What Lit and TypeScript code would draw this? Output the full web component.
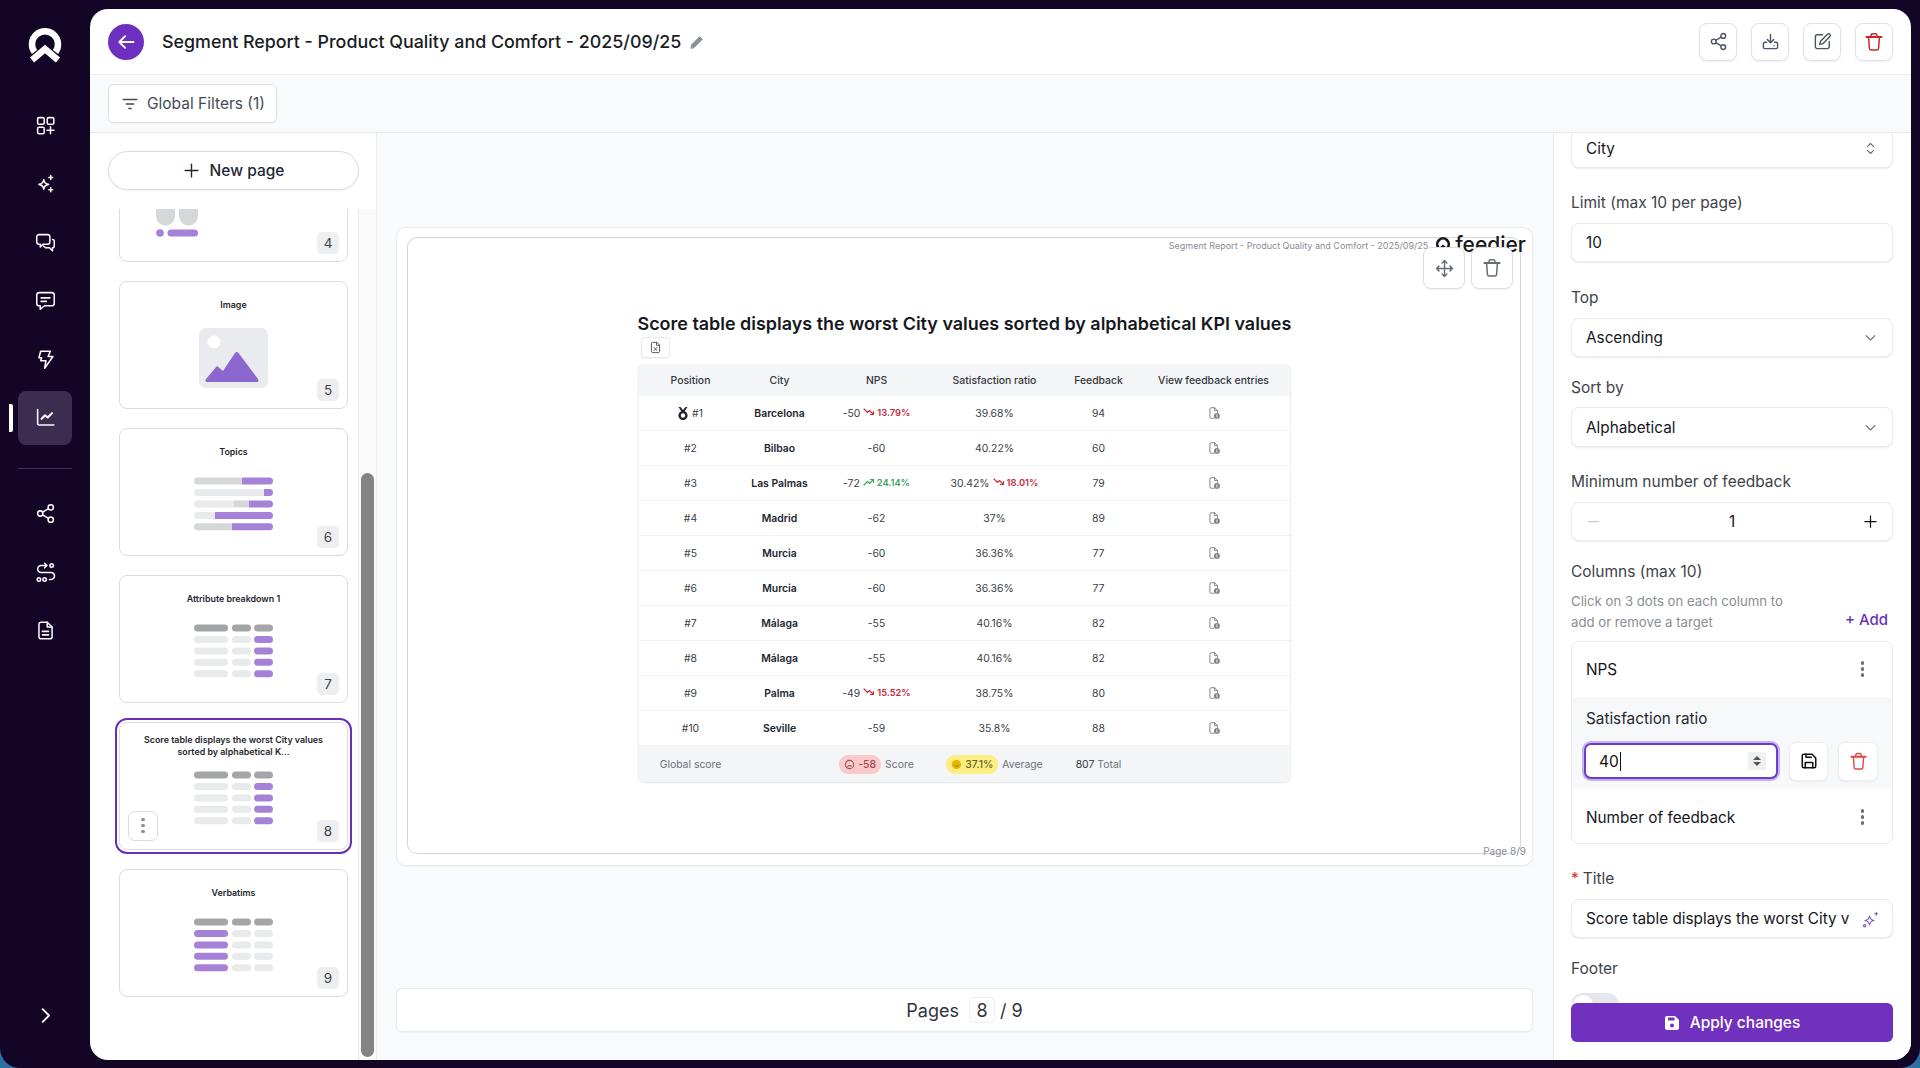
import { LitElement, html, css, svg } from "lit";
import { customElement } from "lit/decorators.js";

const ic = (body: unknown, size = 20, sw = 1.8, cls = "") => html`<svg class=${cls} width=${size} height=${size} viewBox="0 0 24 24" fill="none" stroke="currentColor" stroke-width=${sw} stroke-linecap="round" stroke-linejoin="round">${body}</svg>`;

const P = {
  grid: svg`<rect x="3" y="3" width="7.5" height="7.5" rx="1.5"/><rect x="14" y="3" width="7.5" height="7.5" rx="1.5"/><rect x="3" y="14" width="7.5" height="7.5" rx="1.5"/><path d="M17.7 13.5v8M13.7 17.5h8"/>`,
  spark: svg`<path d="M10 7.500c.6 3.600 2 5 5.500 5.500-3.500.6-4.900 2-5.500 5.500-.6-3.500-2-4.900-5.500-5.500 3.500-.5 4.900-1.900 5.500-5.500z"/><path d="M18 3v4.500M15.800 5.200h4.400M18 17v4.500M15.800 19.200h4.400"/>`,
  chats: svg`<path d="M4.500 3h10a2.500 2.500 0 0 1 2.500 2.500v6a2.500 2.500 0 0 1-2.500 2.500H9l-3 3v-3H4.500A2.500 2.500 0 0 1 2 11.500v-6A2.500 2.500 0 0 1 4.500 3z"/><path d="M20 8.500a2 2 0 0 1 2 2V16a2 2 0 0 1-2 2v3.500L16.500 18H12l-2.500-2"/>`,
  chat: svg`<path d="M5 3h14a3 3 0 0 1 3 3v9a3 3 0 0 1-3 3h-8l-5 4v-4H5a3 3 0 0 1-3-3V6a3 3 0 0 1 3-3z"/><path d="M7 9h10M7 13h6"/>`,
  bolt: svg`<path d="M6.500 2.500h11l-2.500 6h5.500L11 22l1.500-8.500H6.500l1-3.500H4.500z"/>`,
  chart: svg`<path d="M3 3v15.500a2 2 0 0 0 2 2h16.500"/><path d="M7.500 13.500l4-4 3 2.500 5-5" stroke-width="2.400"/>`,
  share: svg`<circle cx="18" cy="5" r="3"/><circle cx="6" cy="12" r="3"/><circle cx="18" cy="19" r="3"/><path d="M8.600 10.500l6.800-4M8.600 13.500l6.800 4"/>`,
  route: svg`<circle cx="19" cy="4" r="2"/><circle cx="4.500" cy="20" r="2"/><circle cx="11" cy="20" r="2"/><path d="M13.500 4H7a4 4 0 0 0 0 8h11a4 4 0 0 1 .5 8h-2"/><path d="M11 1.500 13.500 4 11 6.500"/>`,
  file: svg`<path d="M14 2.500H7a2.500 2.500 0 0 0-2.500 2.500v14A2.500 2.500 0 0 0 7 21.500h10a2.500 2.500 0 0 0 2.500-2.500V8z"/><path d="M14 2.500V8h5.500M8.500 13h7M8.500 17h7"/>`,
  chevR: svg`<path d="M8 3l9 9-9 9"/>`,
  filter: svg`<path d="M3 6h18M7 12h10M10.500 18h3"/>`,
  plus: svg`<path d="M12 3v18M3 12h18"/>`,
  minus: svg`<path d="M4 12h16"/>`,
  arrowL: svg`<path d="M21 12H4M11 5l-7 7 7 7"/>`,
  pencil: svg`<path d="M3 21l1-5L16 4l4 4L8 20z" fill="currentColor"/>`,
  download: svg`<path d="M12 3v10M8 9.500l4 4 4-4"/><path d="M7 13H5a2 2 0 0 0-2 2v4a2 2 0 0 0 2 2h14a2 2 0 0 0 2-2v-4a2 2 0 0 0-2-2h-2"/><path d="M16.500 17.500h.01"/>`,
  edit: svg`<path d="M12 3.500H5.500A2.500 2.500 0 0 0 3 6v12.500A2.500 2.500 0 0 0 5.500 21H18a2.500 2.500 0 0 0 2.500-2.500V12"/><path d="M18.300 2.700a2.200 2.200 0 0 1 3.100 3.100L12.500 14.700l-4 1 1-4z"/>`,
  trash: svg`<path d="M3 6h18" stroke-width="2.600"/><path d="M8.500 5V4a2 2 0 0 1 2-2h3a2 2 0 0 1 2 2v1" /><path d="M5.500 6.500l1 13a2 2 0 0 0 2 2h7a2 2 0 0 0 2-2l1-13"/>`,
  move: svg`<path d="M12 2v20M2 12h20M9 5l3-3 3 3M9 19l3 3 3-3M5 9l-3 3 3 3M19 9l3 3-3 3"/>`,
  updown: svg`<path d="M7 9l5-5 5 5M7 15l5 5 5-5"/>`,
  chevD: svg`<path d="M5 9l7 7 7-7"/>`,
  save: svg`<path d="M5 3h11l5 5v11a2 2 0 0 1-2 2H5a2 2 0 0 1-2-2V5a2 2 0 0 1 2-2z"/><path d="M7 21v-7h10v7M8 3v4h7"/>`,
  aiStar: svg`<path d="M11 7c.7 4 2.300 5.500 6 6-3.700.7-5.300 2.200-6 6-.7-3.800-2.300-5.300-6-6 3.700-.5 5.300-2 6-6z" transform="translate(-1 1)"/><path d="M19 3v4M17 5h4"/><circle cx="3.500" cy="21" r="1.500"/>`,
  docInfo: svg`<path d="M13 3H7a2 2 0 0 0-2 2v14a2 2 0 0 0 2 2h5"/><path d="M13 3l5 5v3M13 3v5h5"/><circle cx="17" cy="17" r="5" fill="currentColor" stroke="none"/><path d="M17 15v4" stroke="#fff" stroke-width="1.500"/>`,
  docX: svg`<path d="M14 2.500H7A2.500 2.500 0 0 0 4.500 5v14A2.500 2.500 0 0 0 7 21.500h10a2.500 2.500 0 0 0 2.500-2.500V8z"/><path d="M14 2.500V8h5.500M9.500 12l5 5.500M14.500 12l-5 5.500"/>`,
  down: svg`<path d="M2 6l7 7 4-4 8 8M21 11v6h-6"/>`,
  up: svg`<path d="M2 18l7-7 4 4 8-8M21 13V7h-6"/>`,
};

const dots = html`<span class="dots"><i></i><i></i><i></i></span>`;

const rows = [
  { p: "#1", medal: true, c: "Barcelona", n: "-50", nt: ["d", "13.79%"], s: "39.68%", f: "94" },
  { p: "#2", c: "Bilbao", n: "-60", s: "40.22%", f: "60" },
  { p: "#3", c: "Las Palmas", n: "-72", nt: ["u", "24.14%"], s: "30.42%", st: ["d", "18.01%"], f: "79" },
  { p: "#4", c: "Madrid", n: "-62", s: "37%", f: "89" },
  { p: "#5", c: "Murcia", n: "-60", s: "36.36%", f: "77" },
  { p: "#6", c: "Murcia", n: "-60", s: "36.36%", f: "77" },
  { p: "#7", c: "Málaga", n: "-55", s: "40.16%", f: "82" },
  { p: "#8", c: "Málaga", n: "-55", s: "40.16%", f: "82" },
  { p: "#9", c: "Palma", n: "-49", nt: ["d", "15.52%"], s: "38.75%", f: "80" },
  { p: "#10", c: "Seville", n: "-59", s: "35.8%", f: "88" },
] as { p: string; medal?: boolean; c: string; n: string; nt?: string[]; s: string; st?: string[]; f: string }[];

const trend = (t?: string[]) => t ? html`<span class="trend ${t[0]}">${ic(t[0] === "d" ? P.down : P.up, 12, 2.2)}${t[1]}</span>` : "";

const H = "#a3a5a8", L = "#e8eaec", V = "#a582d8", G = "#d5d7da";

const bar = (x: number, y: number, w: number, c: string) => svg`<rect x=${x} y=${y} width=${w} height="7" rx="3.500" fill=${c}/>`;
const mini = (first: string) => svg`${[0, 1, 2, 3, 4].map((i) => {
  const y = 49.5 + i * 11.45;
  const a = i === 0 ? H : first;
  const b = i === 0 ? H : L;
  const c = i === 0 ? H : first === V ? L : V;
  return svg`${bar(75, y, 34, a)}${bar(113, y, 19, b)}${bar(135, y, 19, c)}`;
})}`;
const seg = (x: number, y: number, parts: [number, string][]) => {
  let cx = x;
  return parts.map(([w, c], i) => {
    const r = svg`<path d=${i === 0
      ? `M${cx + 3.5} ${y}h${w - 3.5}v7h-${w - 3.5}a3.5 3.5 0 0 1 0-7z`
      : i === parts.length - 1
        ? `M${cx} ${y}h${w - 3.5}a3.5 3.5 0 0 1 0 7h-${w - 3.5}z`
        : `M${cx} ${y}h${w}v7h-${w}z`} fill=${c}/>`;
    cx += w;
    return r;
  });
};

const thumbs = [
  { n: 4, t: "", art: svg`<path d="M37 70h19v12a9.500 9.500 0 0 1-19 0zM60 70h19v12a9.500 9.500 0 0 1-19 0z" fill=${G}/><circle cx="41" cy="99" r="3.800" fill=${V}/><rect x="48.500" y="95.500" width="30.500" height="7" rx="3.500" fill=${V}/>` },
  { n: 5, t: "Image", art: svg`<rect x="80" y="47" width="69" height="60" rx="7" fill="#e9ebee"/><circle cx="95" cy="61" r="6.500" fill="#fff"/><path d="M87 98l11-13 6 5 12-18c1-1.500 2.500-1.500 3.500 0L139 98c1 2 0 3-1.500 3H88.500c-2 0-2.500-1.500-1.500-3z" fill="#8e66cf"/>` },
  { n: 6, t: "Topics", art: svg`${seg(75, 49.5, [[48, G], [31, V]])}${seg(75, 61, [[70, L], [9, V]])}${seg(75, 72.4, [[40, L], [15, G], [24, V]])}${seg(75, 83.9, [[21, L], [58, V]])}${seg(75, 95.3, [[38, G], [41, V]])}` },
  { n: 7, t: "Attribute breakdown 1", art: mini(L) },
  { n: 8, t: "Score table displays the worst City values sorted by alphabetical K...", art: mini(L), sel: true },
  { n: 9, t: "Verbatims", art: mini(V) },
];

@customElement("app-root")
export class AppRoot extends LitElement {
  static styles = css`
    :host { display: block; width: 1920px; height: 1068px; overflow: hidden; background: #2f6fa8; font-family: Inter, "Liberation Sans", sans-serif; color: #111827; }
    * { box-sizing: border-box; }
    svg { display: block; flex: none; }
    .win { display: flex; height: 1068px; background: #130525; border-radius: 0 0 20px 20px; padding: 9px 9px 8px 0; }
    .side { width: 90px; flex: none; margin-top: -9px; margin-bottom: -8px; padding: 27px 0 26px 18px; display: flex; flex-direction: column; color: #fff; }
    .logo { width: 54px; height: 36px; margin-bottom: 35px; display: flex; justify-content: center; }
    .nav { width: 54px; height: 54px; margin-bottom: 4.5px; display: flex; align-items: center; justify-content: center; border-radius: 8px; position: relative; color: #fbf9ff; }
    .nav.on { background: #3a2d50; margin-bottom: 0; }
    .nav.on::before { content: ""; position: absolute; left: -9px; top: 13px; width: 4px; height: 28px; background: #fff; border-radius: 0 2px 2px 0; }
    .rule { width: 54px; height: 1px; background: #3b2f52; margin: 23px 0 18px; flex: none; }
    .chev { margin-top: auto; margin-bottom: 0; }
    .main { flex: 1; min-width: 0; background: #fff; border-radius: 18px; overflow: hidden; display: flex; flex-direction: column; }
    .top { height: 66px; flex: none; display: flex; align-items: center; padding: 0 18px; border-bottom: 1px solid #eceef0; }
    .back { width: 36px; height: 36px; border-radius: 50%; background: #6d2fc0; color: #fff; display: flex; align-items: center; justify-content: center; margin-right: 18px; }
    .ttl { font-size: 17.85px; font-weight: 500; color: #1a1d24; white-space: nowrap; }
    .pen { color: #8b8f96; margin-left: 8px; }
    .acts { margin-left: auto; display: flex; gap: 14px; }
    .ibtn { width: 38px; height: 38px; border: 1px solid #dfe1e4; border-radius: 8px; background: #fff; display: flex; align-items: center; justify-content: center; color: #4b5563; box-shadow: 0 1px 2px rgba(0,0,0,.07); }
    .ibtn.red { color: #c62828; }
    .fbar { height: 58px; flex: none; background: #f9fafb; border-bottom: 1px solid #e6e8eb; padding: 9px 18px; }
    .fbtn { width: 169px; height: 39px; background: #fff; border: 1px solid #dfe1e4; border-radius: 6px; display: flex; align-items: center; gap: 8px; padding-left: 12px; font-size: 15.5px; color: #444b55; box-shadow: 0 1px 2px rgba(0,0,0,.05); }
    .body { flex: 1; display: flex; min-height: 0; position: relative; }
    .left { width: 287px; flex: none; display: flex; flex-direction: column; border-right: 1px solid #eceef0; }
    .npw { height: 76px; flex: none; padding: 18px 18px 0; }
    .npbtn { width: 251px; height: 39px; border: 1px solid #d8dade; border-radius: 20px; display: flex; align-items: center; justify-content: center; gap: 10px; font-size: 15.5px; font-weight: 500; color: #1f2937; background: #fff; box-shadow: 0 1px 2px rgba(0,0,0,.05); }
    .lrow { flex: 1; display: flex; min-height: 0; }
    .lcol { width: 268px; flex: none; overflow: hidden; padding: 0 10px 0 29px; }
    .lin { margin-top: -75.5px; display: flex; flex-direction: column; gap: 19px; }
    .track { flex: 1; background: #fafafa; border-left: 1px solid #e9eaec; padding: 264px 2px 3px 2px; }
    .thumb { height: 100%; border-radius: 7px; background: #848484; }
    .th { width: 229px; height: 128px; border: 1px solid #dadce0; border-radius: 8px; position: relative; background: #fff; flex: none; }
    .th.sel { outline: 2px solid #6a2fb8; outline-offset: 2px; }
    .th .art { position: absolute; left: -1px; top: -1px; }
    .tt { position: absolute; left: 10px; right: 10px; top: -1px; height: 48px; display: flex; align-items: center; justify-content: center; text-align: center; font-size: 8.9px; font-weight: 600; line-height: 11.3px; color: #23262d; }
    .num { position: absolute; right: 8px; bottom: 7px; width: 22px; height: 22px; background: #eceef0; border-radius: 5px; display: flex; align-items: center; justify-content: center; font-size: 13.5px; color: #444; }
    .more { position: absolute; left: 8px; bottom: 8px; width: 30px; height: 30px; border: 1px solid #dadce0; border-radius: 7px; display: flex; align-items: center; justify-content: center; background: #fff; }
    .more .dots i { background: #8a8e95; }
    .dots { display: flex; flex-direction: column; gap: 2.5px; }
    .dots i { width: 3.5px; height: 3.5px; border-radius: 50%; background: #6b7078; display: block; }
    .center { flex: 1; min-width: 0; background: #f9fafb; padding: 94px 20px 0 19px; display: flex; flex-direction: column; }
    .pcard { height: 639px; flex: none; background: #fff; border: 1px solid #e9ebee; border-radius: 10px; padding: 9px 11px 11px 10px; box-shadow: 0 1px 2px rgba(0,0,0,.04); }
    .pg { height: 617px; border: 1.5px solid #d3d5d9; border-radius: 10px; position: relative; background: #fff; }
    .phead { height: 12px; display: flex; justify-content: flex-end; align-items: center; gap: 7px; margin-right: -6px; }
    .phead .small { font-size: 9px; color: #8a8d93; margin-top: 2px; white-space: nowrap; }
    .flogo { display: flex; align-items: center; gap: 4px; font-size: 21px; font-weight: 500; color: #16181d; line-height: 16px; margin-top: 1px; }
    .over { position: absolute; top: 9px; right: 7px; display: flex; gap: 6px; }
    .over div { width: 42px; height: 42px; background: #fff; border: 1px solid #dcdee1; border-radius: 8px; display: flex; align-items: center; justify-content: center; color: #666b73; box-shadow: 0 1px 2px rgba(0,0,0,.05); }
    .pnum { position: absolute; right: -6px; bottom: -4px; font-size: 10px; color: #8a8d93; }
    .blk { width: 653px; margin: 61px auto 0; }
    .ptitle { font-size: 17.95px; line-height: 26px; font-weight: 600; color: #16181d; white-space: nowrap; }
    .xbtn { width: 29px; height: 21px; margin-left: 3px; border: 1px solid #e6e8eb; border-radius: 4px; display: flex; align-items: center; justify-content: center; color: #555; margin-bottom: 6px; box-shadow: 0 1px 1px rgba(0,0,0,.05); }
    .tbl { border-radius: 6px; overflow: hidden; box-shadow: 0 1px 2px rgba(0,0,0,.1); border-left: 1px solid #eff0f2; border-right: 1px solid #eff0f2; font-size: 10.4px; color: #3b3f46; }
    .tr { display: grid; grid-template-columns: 104px 74px 120px 116px 92px 138px 7px; align-items: center; text-align: center; height: 35px; border-bottom: 1.5px solid #f1f2f4; }
    .tr > * { display: flex; align-items: center; justify-content: center; white-space: nowrap; }
    .tr.h { height: 32px; background: #f3f5f6; border: 0; color: #33373d; font-weight: 500; }
    .tr.f { height: 36px; background: #f3f5f6; border: 0; color: #6d7178; }
    .tr b { font-weight: 600; color: #23262d; }
    .trend { display: inline-flex; align-items: center; gap: 2px; font-size: 9.3px; font-weight: 600; margin-left: 3px; position: relative; top: -1px; }
    .trend.d { color: #c7283a; }
    .trend.u { color: #3aa55f; }
    .doc { color: #7d8187; }
    .medal { color: #1f2329; margin-right: 4px; }
    .pill { height: 19px; padding: 0 5px; border-radius: 9px; display: inline-flex; align-items: center; gap: 3px; margin-right: 4px; font-weight: 500; }
    .pill.r { background: #f9c9cc; color: #a24b50; }
    .pill.y { background: #fdee82; color: #6b6320; }
    .tot { color: #33373d; margin-right: 3px; }
    .pager { margin-top: 122px; height: 44px; flex: none; background: #fff; border: 1px solid #e9ebee; border-radius: 6px; display: flex; align-items: center; justify-content: center; font-size: 18px; color: #30343a; box-shadow: 0 1px 2px rgba(0,0,0,.04); }
    .pbox { width: 26px; height: 26px; border: 1px solid #eceef0; border-radius: 4px; display: flex; align-items: center; justify-content: center; margin: 0 5px 0 10px; }
    .right { width: 358px; flex: none; border-left: 1px solid #e6e8eb; padding: 0 18px 0 17px; overflow: hidden; position: relative; background: #fff; }
    .fld { height: 39px; border: 1px solid #e8eaec; border-radius: 8px; display: flex; align-items: center; justify-content: space-between; padding: 0 14px; font-size: 15.3px; color: #15171c; background: #fff; box-shadow: 0 1px 2px rgba(0,0,0,.08); white-space: nowrap; overflow: hidden; }
    .fld > svg { color: #6b7078; }
    .first { margin-top: -4px; }
    .lab { height: 20px; line-height: 20px; font-size: 15.5px; color: #3e4249; margin-bottom: 10px; white-space: nowrap; }
    .m21 { margin-top: 21px; }
    .m24 { margin-top: 25.5px; }
    .m25 { margin-top: 25px; }
    .m26 { margin-top: 26px; }
    .mb9s { margin-bottom: 9px; }
    .tall { height: 40px; }
    .mn { color: #c9ccd1; }
    .pl { color: #111; }
    .help { display: flex; justify-content: space-between; align-items: flex-end; font-size: 13.2px; line-height: 20.5px; color: #8a8e95; margin: -1px 0 8.5px; }
    .add { color: #6a35b3; font-size: 15px; font-weight: 500; padding-right: 5px; line-height: 24px; }
    .cols { height: 203px; border: 1px solid #e8eaec; border-radius: 8px; overflow: hidden; display: flex; flex-direction: column; }
    .crow { height: 55px; flex: none; display: flex; justify-content: space-between; align-items: center; padding: 0 28px 0 14px; font-size: 15.3px; color: #15171c; }
    .crow.last { flex: 1; padding-top: 3px; }
    .csel { height: 92px; flex: none; background: #f6f8fa; padding: 12px 14px 0 14px; font-size: 15.3px; color: #25282e; }
    .csel .nm { height: 20px; line-height: 20px; margin-bottom: 14px; }
    .edr { display: flex; align-items: center; gap: 10px; margin-top: -1px; }
    .inp { width: 196px; height: 36px; margin: 0 1px 0 -2px; border: 2px solid #6d3ccb; box-shadow: 0 0 0 2px #c4b3ee; border-radius: 7px; background: #fff; display: flex; align-items: center; padding: 0 10px 0 13px; font-size: 15.5px; color: #111; }
    .caret { width: 1px; height: 19px; background: #111; margin-left: 1px; }
    .spin { margin-left: auto; width: 18px; height: 18px; background: #eff0f2; border-radius: 2px; display: flex; flex-direction: column; align-items: center; justify-content: center; gap: 2px; }
    .spin i { width: 0; height: 0; border-left: 4px solid transparent; border-right: 4px solid transparent; display: block; }
    .spin i.a { border-bottom: 4px solid #555; }
    .spin i.b { border-top: 4px solid #555; }
    .sq { width: 40px; height: 39px; background: #fff; border: 1px solid #eceef0; border-radius: 7px; display: flex; align-items: center; justify-content: center; color: #111; box-shadow: 0 1px 2px rgba(0,0,0,.06); }
    .sq.red { color: #e04848; }
    .star { color: #d0342c; margin-right: 4px; }
    .tf { padding-right: 12px; }
    .tf > svg { color: #7d5cc6; }
    .lab.nb { margin-bottom: 14px; }
    .tog { width: 48px; height: 24px; border-radius: 12px; background: #e5e7eb; padding: 2px; }
    .tog i { display: block; width: 20px; height: 20px; background: #fff; border-radius: 50%; }
    .apply { position: absolute; left: 17px; right: 18px; top: 870px; height: 57px; background: #fff; }
    .apply div { height: 39px; background: #7032be; border-radius: 6px; color: #fff; font-size: 15.5px; font-weight: 500; display: flex; align-items: center; justify-content: center; gap: 10px; }
  `;

  render() {
    const side = [P.grid, P.spark, P.chats, P.chat, P.bolt];
    const side2 = [P.share, P.route, P.file];
    return html`
      <div class="win">
        <aside class="side">
          <div class="logo">
            <svg width="36" height="36" viewBox="0 0 36 36" fill="none" stroke="#fff" stroke-width="6.500">
              <path d="M7.500 25A13 13 0 1 1 28.500 25"/><path d="M5 33l13-11 13 11" stroke-linejoin="miter"/>
            </svg>
          </div>
          ${side.map((p) => html`<div class="nav">${ic(p, 21, 1.75)}</div>`)}
          <div class="nav on">${ic(P.chart, 21, 1.75)}</div>
          <div class="rule"></div>
          ${side2.map((p) => html`<div class="nav">${ic(p, 21, 1.75)}</div>`)}
          <div class="nav chev">${ic(P.chevR, 17, 2.6)}</div>
        </aside>
        <div class="main">
          <header class="top">
            <div class="back">${ic(P.arrowL, 20, 2.2)}</div>
            <div class="ttl">Segment Report - Product Quality and Comfort - 2025/09/25</div>
            <div class="pen">${ic(P.pencil, 16, 1.5)}</div>
            <div class="acts">
              <div class="ibtn">${ic(P.share, 19)}</div>
              <div class="ibtn">${ic(P.download, 19)}</div>
              <div class="ibtn">${ic(P.edit, 19)}</div>
              <div class="ibtn red">${ic(P.trash, 20)}</div>
            </div>
          </header>
          <div class="fbar"><div class="fbtn">${ic(P.filter, 18, 2)}Global Filters (1)</div></div>
          <div class="body">
            <section class="left">
              <div class="npw"><div class="npbtn">${ic(P.plus, 17, 2)}New page</div></div>
              <div class="lrow">
                <div class="lcol"><div class="lin">
                  ${thumbs.map((t) => html`
                    <div class="th ${t.sel ? "sel" : ""}">
                      <svg class="art" width="229" height="127" viewBox="0 0 229 127">${t.art}</svg>
                      ${t.t ? html`<div class="tt"><span>${t.t}</span></div>` : ""}
                      <div class="num">${t.n}</div>
                      ${t.sel ? html`<div class="more">${dots}</div>` : ""}
                    </div>`)}
                </div></div>
                <div class="track"><div class="thumb"></div></div>
              </div>
            </section>
            <section class="center">
              <div class="pcard">
                <div class="pg">
                  <div class="phead">
                    <span class="small">Segment Report - Product Quality and Comfort - 2025/09/25</span>
                    <span class="flogo">
                      <svg width="16" height="17" viewBox="0 0 36 36" fill="none" stroke="#16181d" stroke-width="6"><path d="M7.500 25A13 13 0 1 1 28.500 25"/><path d="M5 33l13-11 13 11"/></svg>
                      feedier
                    </span>
                  </div>
                  <div class="over"><div>${ic(P.move, 19)}</div><div>${ic(P.trash, 20)}</div></div>
                  <div class="blk">
                    <div class="ptitle">Score table displays the worst City values sorted by alphabetical KPI values</div>
                    <div class="xbtn">${ic(P.docX, 13, 1.8)}</div>
                    <div class="tbl">
                      <div class="tr h"><span>Position</span><span>City</span><span>NPS</span><span>Satisfaction ratio</span><span>Feedback</span><span>View feedback entries</span></div>
                      ${rows.map((r) => html`
                        <div class="tr">
                          <span>${r.medal ? html`<svg class="medal" width="10" height="13" viewBox="0 0 10 13"><path d="M.5 0l3 4.500h3L9.500 0H7.500L5 3 2.500 0z" fill="#1f2329"/><circle cx="5" cy="8.500" r="3.400" fill="none" stroke="#1f2329" stroke-width="2.400"/></svg>` : ""}${r.p}</span>
                          <span><b>${r.c}</b></span>
                          <span>${r.n}${trend(r.nt)}</span>
                          <span>${r.s}${trend(r.st)}</span>
                          <span>${r.f}</span>
                          <span class="doc">${ic(P.docInfo, 14, 1.6)}</span>
                        </div>`)}
                      <div class="tr f">
                        <span>Global score</span><span></span>
                        <span><span class="pill r">${ic(svg`<circle cx="12" cy="12" r="9"/><path d="M8 16c2-2.500 6-2.500 8 0"/>`, 11, 2.2)}-58</span>Score</span>
                        <span><span class="pill y">${ic(svg`<circle cx="12" cy="12" r="10" fill="#e3b400" stroke="none"/><path d="M8 14c2 2.500 6 2.500 8 0" stroke="#8c7000"/>`, 11, 2)}37.1%</span>Average</span>
                        <span><span class="tot">807</span>Total</span>
                        <span></span>
                      </div>
                    </div>
                  </div>
                  <div class="pnum">Page 8/9</div>
                </div>
              </div>
              <div class="pager">Pages<span class="pbox">8</span>/ 9</div>
            </section>
            <section class="right">
              <div class="fld first">City${ic(P.updown, 15, 1.8)}</div>
              <div class="lab m25">Limit (max 10 per page)</div>
              <div class="fld">10</div>
              <div class="lab m26">Top</div>
              <div class="fld">Ascending${ic(P.chevD, 15, 1.8)}</div>
              <div class="lab m21 mb9s">Sort by</div>
              <div class="fld tall">Alphabetical${ic(P.chevD, 15, 1.8)}</div>
              <div class="lab m25">Minimum number of feedback</div>
              <div class="fld"><span class="mn">${ic(P.minus, 15, 2)}</span><span>1</span><span class="pl">${ic(P.plus, 15, 2)}</span></div>
              <div class="lab m21">Columns (max 10)</div>
              <div class="help"><div>Click on 3 dots on each column to<br />add or remove a target</div><div class="add">+ Add</div></div>
              <div class="cols">
                <div class="crow">NPS ${dots}</div>
                <div class="csel">
                  <div class="nm">Satisfaction ratio</div>
                  <div class="edr">
                    <div class="inp">40<span class="caret"></span><span class="spin"><i class="a"></i><i class="b"></i></span></div>
                    <div class="sq">${ic(P.save, 18, 2)}</div>
                    <div class="sq red">${ic(P.trash, 19, 1.8)}</div>
                  </div>
                </div>
                <div class="crow last">Number of feedback ${dots}</div>
              </div>
              <div class="lab m24"><span class="star">*</span>Title</div>
              <div class="fld tf"><span>Score table displays the worst City v</span>${ic(P.aiStar, 18, 1.6)}</div>
              <div class="lab m21 nb">Footer</div>
              <div class="tog"><i></i></div>
              <div class="apply"><div><svg width="16" height="16" viewBox="0 0 16 16"><path d="M3 1h8l4 4v8a2 2 0 0 1-2 2H3a2 2 0 0 1-2-2V3a2 2 0 0 1 2-2z" fill="#fff"/><rect x="4" y="2.500" width="6.500" height="3" fill="#7032be"/><circle cx="8" cy="10.500" r="2" fill="#7032be"/></svg>Apply changes</div></div>
            </section>
          </div>
        </div>
      </div>`;
  }
}
